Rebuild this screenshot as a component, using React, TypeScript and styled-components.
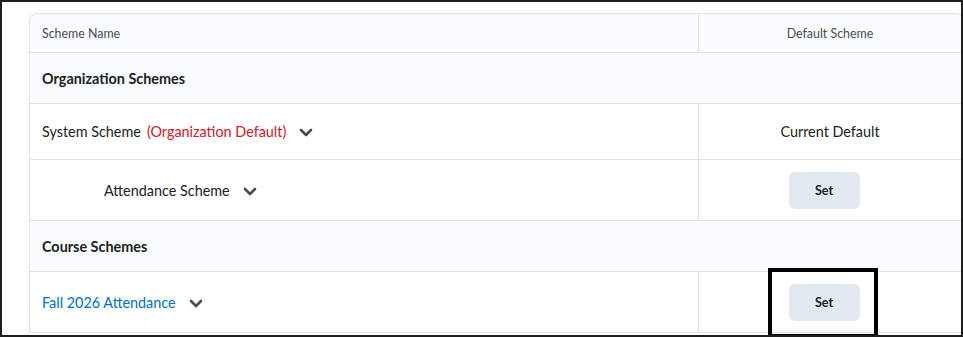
import * as React from 'react';
import styled, { createGlobalStyle } from 'styled-components';

const GlobalStyle = createGlobalStyle`
    html, body {
        margin: 0;
        padding: 0;
        background: #ffffff;
    }
    body {
        font-family: Lato, "Open Sans", "Liberation Sans", sans-serif;
        color: #202122;
    }
`;

type Scheme = {
    name: string;
    note?: string;
    indent?: boolean;
    link?: boolean;
    status: 'current' | 'set';
    highlight?: boolean;
    height: number;
};

type Group = {
    title: string;
    height: number;
    schemes: Scheme[];
};

const groups: Group[] = [
    {
        title: 'Organization Schemes',
        height: 51,
        schemes: [
            { name: 'System Scheme', note: '(Organization Default)', status: 'current', height: 56 },
            { name: 'Attendance Scheme', indent: true, status: 'set', height: 61 },
        ],
    },
    {
        title: 'Course Schemes',
        height: 51,
        schemes: [
            { name: 'Fall 2026 Attendance', link: true, status: 'set', highlight: true, height: 61 },
        ],
    },
];

const Chevron = () => (
    <ChevronIcon viewBox="0 0 14 9" width="14" height="9" aria-hidden>
        <path d="M2 2 L7 7 L12 2" fill="none" stroke="#494c4e" strokeWidth="2.6" strokeLinecap="round" strokeLinejoin="round" />
    </ChevronIcon>
);

export default function App() {
    return (
        <Frame>
            <GlobalStyle />
            <Table>
                <HeadCell>Scheme Name</HeadCell>
                <HeadCell center last>Default Scheme</HeadCell>
                {groups.map((group) => (
                    <React.Fragment key={group.title}>
                        <GroupRow h={group.height}>{group.title}</GroupRow>
                        {group.schemes.map((scheme) => (
                            <React.Fragment key={scheme.name}>
                                <NameCell h={scheme.height} indent={scheme.indent}>
                                    <SchemeName link={scheme.link}>{scheme.name}</SchemeName>
                                    {scheme.note && <Note>{scheme.note}</Note>}
                                    <Chevron />
                                </NameCell>
                                <DefaultCell h={scheme.height}>
                                    {scheme.status === 'current' ? (
                                        <CurrentLabel>Current Default</CurrentLabel>
                                    ) : (
                                        <ButtonSlot>
                                            <SetButton>Set</SetButton>
                                            {scheme.highlight && <Highlight />}
                                        </ButtonSlot>
                                    )}
                                </DefaultCell>
                            </React.Fragment>
                        ))}
                    </React.Fragment>
                ))}
            </Table>
        </Frame>
    );
}

const Frame = styled.div`
    box-sizing: border-box;
    width: 963px;
    height: 337px;
    border: 2px solid #1e1e1e;
    padding: 11px 0 0 27px;
    overflow: hidden;
    background: #ffffff;
`;

const Table = styled.div`
    display: grid;
    grid-template-columns: 668px 263px;
    width: 933px;
    border: 1px solid #dfe3e8;
    border-bottom: none;
    border-radius: 8px 8px 0 0;
`;

const HeadCell = styled.div<{ center?: boolean; last?: boolean }>`
    height: 38px;
    display: flex;
    align-items: center;
    justify-content: ${(p) => (p.center ? 'center' : 'flex-start')};
    padding: 0 12px;
    background: #f9fbff;
    border-bottom: 1px solid #dfe3e8;
    border-left: ${(p) => (p.last ? '1px solid #dfe3e8' : 'none')};
    border-radius: ${(p) => (p.last ? '0 8px 0 0' : '8px 0 0 0')};
    font-size: 12.4px;
    color: #494c4e;
`;

const GroupRow = styled.div<{ h: number }>`
    grid-column: 1 / -1;
    height: ${(p) => p.h - 1}px;
    display: flex;
    align-items: center;
    padding: 0 12px;
    background: #f9fbff;
    border-bottom: 1px solid #dfe3e8;
    font-size: 14.4px;
    font-weight: 700;
    color: #202122;
`;

const NameCell = styled.div<{ h: number; indent?: boolean }>`
    height: ${(p) => p.h - 1}px;
    display: flex;
    align-items: center;
    padding: 0 12px 0 ${(p) => (p.indent ? '74px' : '12px')};
    border-bottom: 1px solid #dfe3e8;
    font-size: 14.4px;
    background: #ffffff;
`;

const SchemeName = styled.span<{ link?: boolean }>`
    color: ${(p) => (p.link ? '#006fbf' : '#202122')};
`;

const Note = styled.span`
    margin-left: 6px;
    color: #cd2026;
`;

const ChevronIcon = styled.svg`
    margin-left: 13px;
    margin-top: 2px;
`;

const DefaultCell = styled.div<{ h: number }>`
    height: ${(p) => p.h - 1}px;
    display: flex;
    align-items: center;
    justify-content: center;
    border-left: 1px solid #dfe3e8;
    border-bottom: 1px solid #dfe3e8;
    background: #ffffff;
`;

const CurrentLabel = styled.span`
    font-size: 14.4px;
    color: #202122;
`;

const ButtonSlot = styled.div`
    position: relative;
    display: flex;
    margin-right: 12px;
`;

const SetButton = styled.button`
    width: 71px;
    height: 37px;
    border: none;
    border-radius: 6px;
    background: #e3e9f1;
    font-family: Lato, "Open Sans", "Liberation Sans", sans-serif;
    font-size: 12.6px;
    font-weight: 700;
    color: #202122;
    cursor: pointer;
`;

const Highlight = styled.div`
    position: absolute;
    left: -21px;
    top: -16px;
    width: 102px;
    height: 62px;
    border: 4px solid #000000;
    pointer-events: none;
`;
